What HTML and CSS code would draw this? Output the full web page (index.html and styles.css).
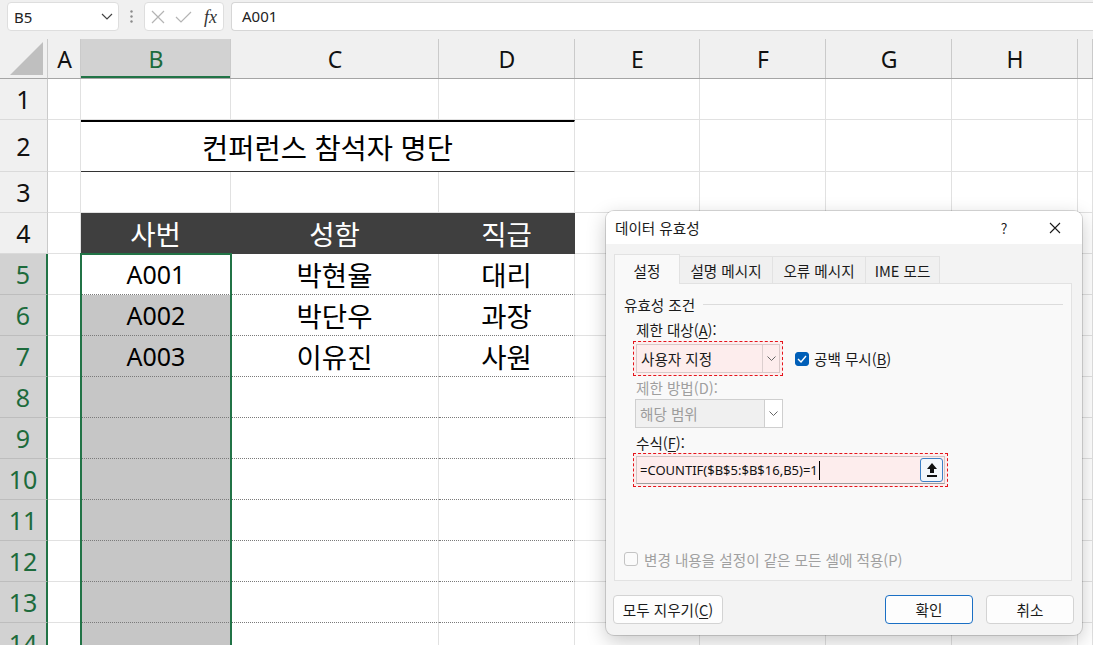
FILE: index.html
```html
<!DOCTYPE html>
<html lang="ko">
<head>
<meta charset="utf-8">
<title>데이터 유효성</title>
<link rel="stylesheet" href="styles.css">
</head>
<body>
<div class="app">
  <div class="topbar">
    <div class="namebox"><span>B5</span>
      <svg width="12" height="7" viewBox="0 0 12 7"><path d="M1 1l5 5 5-5" fill="none" stroke="#444" stroke-width="1.2"/></svg>
    </div>
    <div class="vdots"><svg width="3" height="13" viewBox="0 0 3 13"><circle cx="1.5" cy="1.5" r="1.2" fill="#8a8a8a"/><circle cx="1.5" cy="6.5" r="1.2" fill="#8a8a8a"/><circle cx="1.5" cy="11.5" r="1.2" fill="#8a8a8a"/></svg></div>
    <div class="fbtns">
      <svg class="ix" width="14" height="14" viewBox="0 0 14 14"><path d="M1 1l12 12M13 1L1 13" stroke="#b4b4b4" stroke-width="1.2"/></svg>
      <svg class="ic" width="17" height="12" viewBox="0 0 17 12"><path d="M1 6l5 5L16 1" fill="none" stroke="#b4b4b4" stroke-width="1.2"/></svg>
      <span class="fx">fx</span>
    </div>
    <div class="finput">A001</div>
  </div>

  <div class="sheet">
    <div class="corner"><svg width="33" height="33" viewBox="0 0 33 33"><path d="M0 33H33V0z" fill="#bfbfbf"/></svg></div>
    <div class="ch">A</div><div class="ch sel">B</div><div class="ch">C</div><div class="ch">D</div><div class="ch">E</div><div class="ch">F</div><div class="ch">G</div><div class="ch">H</div><div class="ch"></div>

    <div class="rh">1</div><div class="c"></div><div class="c"></div><div class="c"></div><div class="c"></div><div class="c"></div><div class="c"></div><div class="c"></div><div class="c"></div><div class="c"></div>

    <div class="rh">2</div><div class="c"></div><div class="c title">컨퍼런스 참석자 명단</div><div class="c"></div><div class="c"></div><div class="c"></div><div class="c"></div><div class="c"></div>

    <div class="rh">3</div><div class="c"></div><div class="c"></div><div class="c"></div><div class="c"></div><div class="c"></div><div class="c"></div><div class="c"></div><div class="c"></div><div class="c"></div>

    <div class="rh">4</div><div class="c"></div><div class="c hd k">사번</div><div class="c hd k">성함</div><div class="c hd k">직급</div><div class="c"></div><div class="c"></div><div class="c"></div><div class="c"></div><div class="c"></div>

    <div class="rh sel">5</div><div class="c"></div><div class="c d bsel active">A001</div><div class="c d k">박현율</div><div class="c d k">대리</div><div class="c"></div><div class="c"></div><div class="c"></div><div class="c"></div><div class="c"></div>

    <div class="rh sel">6</div><div class="c"></div><div class="c d bsel">A002</div><div class="c d k">박단우</div><div class="c d k">과장</div><div class="c"></div><div class="c"></div><div class="c"></div><div class="c"></div><div class="c"></div>

    <div class="rh sel">7</div><div class="c"></div><div class="c d bsel">A003</div><div class="c d k">이유진</div><div class="c d k">사원</div><div class="c"></div><div class="c"></div><div class="c"></div><div class="c"></div><div class="c"></div>

    <div class="rh sel">8</div><div class="c"></div><div class="c d bsel"></div><div class="c d"></div><div class="c d"></div><div class="c"></div><div class="c"></div><div class="c"></div><div class="c"></div><div class="c"></div>

    <div class="rh sel">9</div><div class="c"></div><div class="c d bsel"></div><div class="c d"></div><div class="c d"></div><div class="c"></div><div class="c"></div><div class="c"></div><div class="c"></div><div class="c"></div>

    <div class="rh sel">10</div><div class="c"></div><div class="c d bsel"></div><div class="c d"></div><div class="c d"></div><div class="c"></div><div class="c"></div><div class="c"></div><div class="c"></div><div class="c"></div>

    <div class="rh sel">11</div><div class="c"></div><div class="c d bsel"></div><div class="c d"></div><div class="c d"></div><div class="c"></div><div class="c"></div><div class="c"></div><div class="c"></div><div class="c"></div>

    <div class="rh sel">12</div><div class="c"></div><div class="c d bsel"></div><div class="c d"></div><div class="c d"></div><div class="c"></div><div class="c"></div><div class="c"></div><div class="c"></div><div class="c"></div>

    <div class="rh sel">13</div><div class="c"></div><div class="c d bsel"></div><div class="c d"></div><div class="c d"></div><div class="c"></div><div class="c"></div><div class="c"></div><div class="c"></div><div class="c"></div>

    <div class="rh sel">14</div><div class="c"></div><div class="c d bsel"></div><div class="c d"></div><div class="c d"></div><div class="c"></div><div class="c"></div><div class="c"></div><div class="c"></div><div class="c"></div>
  </div>

  <div class="selection"></div>

  <div class="dialog">
    <div class="dtitle">
      <span class="dt">데이터 유효성</span>
      <span class="help">?</span>
      <svg class="close" width="12" height="12" viewBox="0 0 12 12"><path d="M1 1l10 10M11 1L1 11" stroke="#1a1a1a" stroke-width="1.1"/></svg>
    </div>
    <div class="dbody">
      <div class="tabs">
        <div class="tab active">설정</div>
        <div class="tab w93">설명 메시지</div>
        <div class="tab w93">오류 메시지</div>
        <div class="tab w74">IME 모드</div>
      </div>
      <div class="panel">
        <div class="legend"><span>유효성 조건</span><i class="rule"></i></div>
        <div class="lbl">제한 대상(<u>A</u>):</div>
        <div class="row1">
          <div class="mark sel1">
            <div class="combo"><span class="ctext">사용자 지정</span><span class="drop"><svg width="9" height="5" viewBox="0 0 9 5"><path d="M0.5 0.5l4 4 4-4" fill="none" stroke="#666" stroke-width="1"/></svg></span></div>
          </div>
          <div class="chk"><span class="box on"><svg width="10" height="8" viewBox="0 0 10 8"><path d="M1 4l3 3 5-6" fill="none" stroke="#fff" stroke-width="1.4"/></svg></span><span>공백 무시(<u>B</u>)</span></div>
        </div>
        <div class="lbl dis">제한 방법(D):</div>
        <div class="combo disabled"><span class="ctext">해당 범위</span><span class="drop"><svg width="9" height="5" viewBox="0 0 9 5"><path d="M0.5 0.5l4 4 4-4" fill="none" stroke="#666" stroke-width="1"/></svg></span></div>
        <div class="lbl l3">수식(<u>F</u>):</div>
        <div class="mark fbox">
          <div class="field"><span class="ftext">=COUNTIF($B$5:$B$16,B5)=1</span><i class="caret"></i>
            <span class="refbtn"><svg width="12" height="16" viewBox="0 0 12 16"><path d="M6 1L11 7H8V11H4V7H1Z" fill="#111"/><rect x="1" y="13" width="10" height="2" fill="#111"/></svg></span>
          </div>
        </div>
        <div class="apply"><span class="box"></span><span>변경 내용을 설정이 같은 모든 셀에 적용(P)</span></div>
      </div>
      <div class="btns">
        <div class="btn wide">모두 지우기(<u>C</u>)</div>
        <span class="sp"></span>
        <div class="btn primary">확인</div>
        <div class="btn cancel">취소</div>
      </div>
    </div>
  </div>
</div>
</body>
</html>
```
FILE: styles.css
```css
html, body {
  margin: 0;
  padding: 0;
  background: #fff;
}
body {
  width: 1093px;
  height: 645px;
  overflow: hidden;
  font-family: "Noto Sans", "Noto Sans CJK KR", sans-serif;
}
.app {
  position: relative;
  width: 1093px;
  height: 645px;
  overflow: hidden;
}

/* top bar */
.topbar {
  height: 39px;
  box-sizing: border-box;
  background: #f0f0f0;
  display: flex;
  align-items: flex-start;
  padding-top: 2px;
}
.namebox {
  margin-left: 7px;
  width: 112px;
  height: 29px;
  box-sizing: border-box;
  background: #fff;
  border: 1px solid #dedede;
  border-radius: 4px;
  display: flex;
  align-items: center;
  justify-content: space-between;
  padding: 0 5px 0 6px;
  font-size: 15px;
  color: #222;
}
.vdots {
  width: 25px;
  height: 29px;
  display: flex;
  align-items: center;
  justify-content: center;
}
.fbtns {
  width: 80px;
  height: 29px;
  box-sizing: border-box;
  background: #fff;
  border: 1px solid #dedede;
  border-radius: 4px;
  display: flex;
  align-items: center;
  padding-left: 6px;
}
.fbtns .ic { margin-left: 10px; }
.fx {
  margin-left: 12px;
  font-family: "Liberation Serif", serif;
  font-style: italic;
  font-size: 18px;
  color: #333;
  line-height: 1;
}
.finput {
  margin-left: 7px;
  flex: 1;
  height: 29px;
  box-sizing: border-box;
  background: #fff;
  border: 1px solid #d6d6d6;
  border-right: none;
  border-radius: 4px 0 0 4px;
  padding-left: 10px;
  font-size: 15px;
  line-height: 27px;
  color: #222;
}

/* sheet */
.sheet {
  display: grid;
  grid-template-columns: 48px 33px 150px 208px 136px 125px 126px 126px 126px 15px;
  grid-template-rows: 40px 41px 52px 41px 41px 41px 41px 41px 41px 41px 41px 41px 41px 41px 41px;
  font-family: "Noto Sans", "Noto Sans CJK KR", sans-serif;
}
.corner {
  background: #f0f0f0;
  border-right: 1px solid #cacaca;
  border-bottom: 1px solid #a5a5a5;
  box-sizing: border-box;
  display: flex;
  align-items: flex-end;
  justify-content: flex-end;
  padding: 0 4px 3px 0;
}
.ch {
  position: relative;
  background: #f0f0f0;
  border-bottom: 1px solid #a5a5a5;
  box-sizing: border-box;
  display: flex;
  align-items: center;
  justify-content: center;
  font-size: 23px;
  color: #111;
  padding-top: 1px;
}
.ch::after {
  content: "";
  position: absolute;
  right: 0;
  top: 0;
  bottom: 0;
  width: 1px;
  background: #cacaca;
}
.ch.sel {
  background: #d2d2d2;
  color: #1d6b3c;
  box-shadow: inset 0 -2px 0 #217346;
}
.rh {
  background: #f0f0f0;
  border-right: 1px solid #cacaca;
  border-bottom: 1px solid #dadada;
  box-sizing: border-box;
  display: flex;
  align-items: center;
  justify-content: center;
  font-size: 25px;
  color: #111;
}
.rh.sel {
  background: #d2d2d2;
  color: #1d6b3c;
  border-right: 2px solid #217346;
  border-bottom-color: #bdbdbd;
}
.c {
  border-right: 1px solid #e1e1e1;
  border-bottom: 1px solid #e1e1e1;
  box-sizing: border-box;
  display: flex;
  align-items: center;
  justify-content: center;
  font-size: 25px;
  color: #000;
  white-space: nowrap;
}
.c.k {
  font-size: 27.5px;
}
.c.title {
  grid-column: span 3;
  border-top: 2px solid #000;
  border-bottom: 1px solid #333;
  font-size: 28.5px;
  padding-bottom: 1px;
}
.c.hd {
  background: #3f3f3f;
  color: #fff;
  border-right-color: #3f3f3f;
  border-bottom-color: #3f3f3f;
}
.c.d {
  border-bottom: 1px dotted #7a7a7a;
}
.c.bsel {
  background: #c6c6c6;
  border-right: none;
}
.c.bsel.active {
  background: #fff;
}
.selection {
  position: absolute;
  left: 80px;
  top: 253px;
  width: 152px;
  height: 420px;
  box-sizing: border-box;
  border: 2px solid #217346;
  pointer-events: none;
}

/* dialog */
.dialog {
  position: absolute;
  left: 606px;
  top: 211px;
  width: 476px;
  height: 424px;
  box-sizing: border-box;
  background: #f3f3f3;
  border-radius: 8px;
  box-shadow: 0 0 0 1px rgba(0, 0, 0, 0.14), 0 6px 20px rgba(0, 0, 0, 0.22);
  overflow: hidden;
  display: flex;
  flex-direction: column;
  font-family: "Noto Sans CJK KR", sans-serif;
  font-size: 14.6px;
  color: #1a1a1a;
}
.dtitle {
  height: 33px;
  flex: none;
  background: #fff;
  display: flex;
  align-items: center;
  padding-left: 9px;
  position: relative;
}
.dt { flex: 1; }
.help {
  width: 14px;
  text-align: center;
  margin-right: 38px;
  font-size: 14px;
}
.close { margin-right: 21px; }
.dbody {
  flex: 1;
  padding: 10px 8px 0 8px;
  display: flex;
  flex-direction: column;
}
.tabs {
  display: flex;
  align-items: flex-end;
  height: 29px;
  position: relative;
  z-index: 1;
}
.tab {
  height: 27px;
  box-sizing: border-box;
  border: 1px solid #e2e2e2;
  border-bottom: none;
  background: #f0f0f0;
  display: flex;
  align-items: center;
  justify-content: center;
  margin-left: -1px;
  color: #1a1a1a;
  white-space: nowrap;
}
.tab.active {
  width: 66px;
  height: 30px;
  margin-left: 0;
  margin-bottom: -1px;
  background: #f9f9f9;
  padding-top: 1px;
}
.tab.w93 { width: 94px; }
.tab.w74 { width: 75px; }
.panel {
  width: 458px;
  height: 298px;
  flex: none;
  box-sizing: border-box;
  border: 1px solid #e2e2e2;
  background: #f9f9f9;
  display: flex;
  flex-direction: column;
  padding: 0 8px 0 9px;
}
.legend {
  margin-top: 10px;
  height: 20px;
  display: flex;
  align-items: center;
}
.rule {
  flex: 1;
  height: 1px;
  background: #dcdcdc;
  margin-left: 8px;
}
.lbl {
  margin-top: 6px;
  height: 20px;
  line-height: 20px;
  padding-left: 12px;
}
.lbl.dis {
  margin-top: 2px;
  color: #9f9f9f;
}
.lbl.l3 { margin-top: 5px; }
.row1 {
  margin-top: 1px;
  display: flex;
  align-items: center;
}
.mark {
  margin-left: 9px;
  box-sizing: border-box;
  border: 1px dashed #e5141b;
  background: #fdeded;
  padding: 2px;
}
.sel1 {
  width: 150px;
  height: 35px;
}
.combo {
  height: 29px;
  box-sizing: border-box;
  border: 1px solid #d9c9c9;
  display: flex;
  align-items: center;
}
.ctext {
  flex: 1;
  padding-left: 4px;
  white-space: nowrap;
}
.drop {
  width: 17px;
  height: 100%;
  box-sizing: border-box;
  border-left: 1px solid #dccfcf;
  display: flex;
  align-items: center;
  justify-content: center;
}
.combo.disabled {
  margin-left: 11px;
  width: 148px;
  margin-top: 1px;
  border-color: #cfcfcf;
  background: #f0f0f0;
  color: #9c9c9c;
}
.combo.disabled .drop {
  width: 18px;
  background: #fff;
  border-left-color: #cfcfcf;
}
.chk {
  margin-left: 12px;
  display: flex;
  align-items: center;
  white-space: nowrap;
}
.box {
  width: 14px;
  height: 14px;
  flex: none;
  box-sizing: border-box;
  border-radius: 3px;
  border: 1px solid #c4c4c4;
  background: #fbfbfb;
  display: flex;
  align-items: center;
  justify-content: center;
  margin-right: 5px;
}
.box.on {
  background: #005fb8;
  border-color: #005fb8;
}
.fbox {
  width: 315px;
  height: 34px;
}
.field {
  height: 28px;
  box-sizing: border-box;
  border: 1px solid #d3c6c6;
  border-bottom-color: #9e9e9e;
  display: flex;
  align-items: center;
  padding-left: 3px;
}
.ftext {
  font-family: "Noto Sans", sans-serif;
  font-size: 13px;
  color: #111;
}
.caret {
  width: 1px;
  height: 19px;
  background: #000;
  margin-left: 1px;
}
.refbtn {
  margin-left: auto;
  margin-right: 1px;
  width: 23px;
  height: 24px;
  box-sizing: border-box;
  border: 1px solid #3d80c6;
  border-radius: 3px;
  background: #f4f7fb;
  display: flex;
  align-items: center;
  justify-content: center;
}
.apply {
  margin-top: auto;
  margin-bottom: 11px;
  height: 20px;
  display: flex;
  align-items: center;
  color: #a0a0a0;
  white-space: nowrap;
}
.apply .box { margin-right: 6px; }
.btns {
  margin-top: 14px;
  height: 29px;
  display: flex;
}
.btn {
  height: 29px;
  box-sizing: border-box;
  border: 1px solid #d3d3d3;
  border-radius: 4px;
  background: #fdfdfd;
  display: flex;
  align-items: center;
  justify-content: center;
  width: 88px;
  white-space: nowrap;
}
.btn.wide {
  width: 110px;
  margin-left: -1px;
}
.sp { flex: 1; }
.btn.primary {
  border-color: #1a6fc4;
}
.btn.cancel {
  margin-left: 13px;
}
u {
  text-decoration: underline;
  text-underline-offset: 2px;
}
```
